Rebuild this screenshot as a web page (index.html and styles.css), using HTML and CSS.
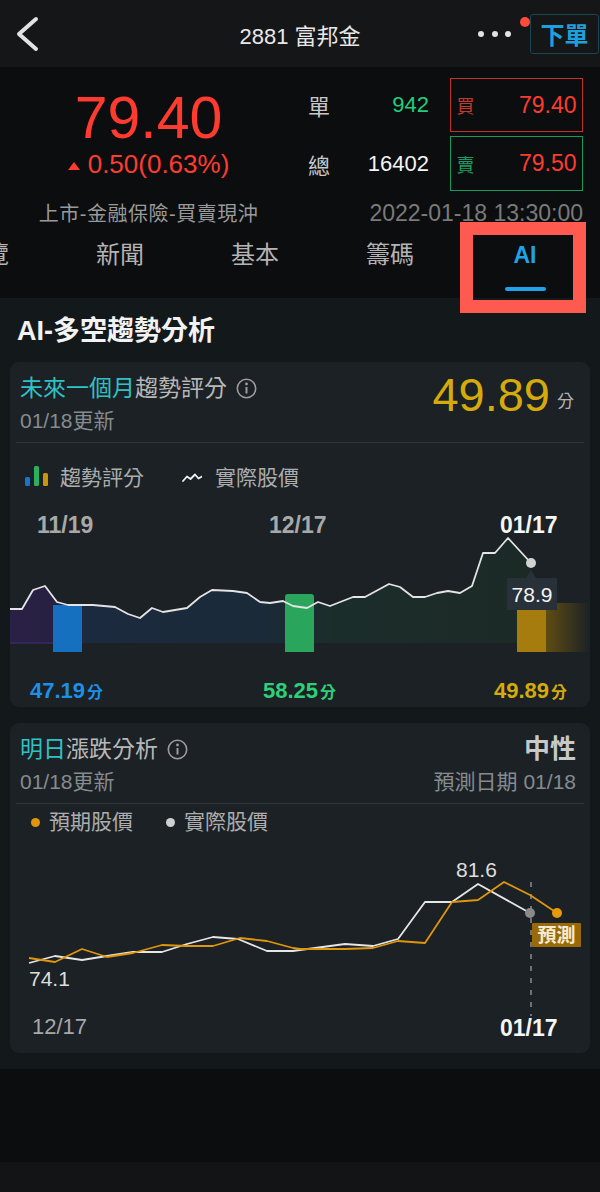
FILE: index.html
```html
<!DOCTYPE html>
<html lang="zh-Hant">
<head>
<meta charset="utf-8">
<title>2881 富邦金</title>
<link rel="stylesheet" href="styles.css">
</head>
<body>
<header class="topbar">
  <div class="tb-left">
    <svg class="back" width="26" height="36" viewBox="0 0 26 36"><path d="M22 3 L5 18 L22 33" fill="none" stroke="#e2e2e2" stroke-width="4" stroke-linecap="round" stroke-linejoin="round"/></svg>
  </div>
  <div class="tb-title">2881 富邦金</div>
  <div class="tb-right">
    <div class="dots"><i></i><i></i><i></i></div>
    <div class="order-btn">下單<span class="badge"></span></div>
  </div>
</header>

<section class="quote">
  <div class="q-left">
    <div class="price">79.40</div>
    <div class="change"><span class="tri"></span>0.50(0.63%)</div>
    <div class="cat">上市-金融保險-買賣現沖</div>
  </div>
  <div class="q-right">
    <div class="q-row">
      <span class="q-lab">單</span><span class="q-val green">942</span>
      <div class="box buy"><span>買</span><b>79.40</b></div>
    </div>
    <div class="q-row r2">
      <span class="q-lab">總</span><span class="q-val">16402</span>
      <div class="box sell"><span>賣</span><b>79.50</b></div>
    </div>
    <div class="q-time">2022-01-18 13:30:00</div>
  </div>
</section>

<nav class="tabs-wrap">
  <div class="tabs">
    <div class="tab"><span>總覽</span></div>
    <div class="tab"><span>新聞</span></div>
    <div class="tab"><span>基本</span></div>
    <div class="tab"><span>籌碼</span></div>
    <div class="tab active"><span>AI</span><i class="ul"></i></div>
  </div>
</nav>

<main class="content">
  <h2 class="sec-title">AI-多空趨勢分析</h2>

  <div class="card">
    <div class="card-head h1">
      <div>
        <div class="card-title"><span class="teal">未來一個月</span>趨勢評分<svg class="info" width="21" height="21" viewBox="0 0 21 21"><circle cx="10.5" cy="10.5" r="9.2" fill="none" stroke="#9c9c9c" stroke-width="1.6"/><circle cx="10.5" cy="6" r="1.4" fill="#9c9c9c"/><path d="M10.5 9 V15.5" stroke="#9c9c9c" stroke-width="2"/></svg></div>
        <div class="card-sub">01/18更新</div>
      </div>
      <div class="score"><span class="num">49.89</span><span class="unit">分</span></div>
    </div>
    <div class="legend l1">
      <span class="lg"><svg class="bars" width="23" height="20" viewBox="0 0 23 20"><rect x="0" y="11" width="5" height="9" rx="1.5" fill="#1677c8"/><rect x="9" y="0" width="5" height="20" rx="1.5" fill="#2bb061"/><rect x="18" y="7" width="5" height="13" rx="1.5" fill="#c9950d"/></svg>趨勢評分</span>
      <span class="lg"><svg class="zig" width="20" height="10" viewBox="0 0 20 10"><polyline points="1,8 5,3.5 8.5,6 13,1.5 16.5,5.5 20,3.5" fill="none" stroke="#f0f0f0" stroke-width="1.8" stroke-linejoin="round" stroke-linecap="round"/></svg>實際股價</span>
    </div>
    <svg class="chart" width="580" height="207" viewBox="10 500 580 207">
      <defs>
        <linearGradient id="ag" x1="0" x2="1" y1="0" y2="0">
          <stop offset="0" stop-color="#2a1f46"/>
          <stop offset="0.08" stop-color="#282043"/>
          <stop offset="0.15" stop-color="#1b2a3e"/>
          <stop offset="0.48" stop-color="#1a2a39"/>
          <stop offset="0.62" stop-color="#1b2d2b"/>
          <stop offset="1" stop-color="#1c2a26"/>
        </linearGradient>
        <linearGradient id="goldfade" x1="0" x2="1" y1="0" y2="0">
          <stop offset="0" stop-color="#5f4c12"/>
          <stop offset="1" stop-color="#5f4c12" stop-opacity="0"/>
        </linearGradient>
      </defs>
      <text x="37" y="533" class="dt">11/19</text>
      <text x="269" y="533" class="dt">12/17</text>
      <text x="500" y="533" class="dt wh">01/17</text>
      <path d="M8 643 L8 609 L22 609 L33 590 L45 586 L57 602 L68 605 L93 605 L115 607 L128 614 L140 618 L152 608 L163 612 L187 608 L200 597 L212 590 L233 591 L247 593 L260 602 L270 603 L283 601 L293 606 L307 608 L318 602 L330 606 L353 597 L365 597 L389 584 L400 587 L413 597 L425 597 L437 593 L448 591 L460 593 L472 586 L483 553 L495 553 L508 538 L531 563 L531 643 Z" fill="url(#ag)"/>
      <path d="M8 643 H53" stroke="#3a2a66" stroke-width="1.5"/>
      <rect x="53" y="605" width="29" height="47" fill="#1670c0"/>
      <path d="M285 652 V597 Q285 594 288 594 H311 Q314 594 314 597 V652 Z" fill="#2aa65c"/>
      <rect x="517" y="609" width="29" height="43" fill="#a77c0f"/>
      <rect x="546" y="603" width="44" height="49" fill="url(#goldfade)"/>
      <polyline points="8,609 22,609 33,590 45,586 57,602 68,605 93,605 115,607 128,614 140,618 152,608 163,612 187,608 200,597 212,590 233,591 247,593 260,602 270,603 283,601 293,606 307,608 318,602 330,606 353,597 365,597 389,584 400,587 413,597 425,597 437,593 448,591 460,593 472,586 483,553 495,553 508,538 531,563" fill="none" stroke="#e4e4e4" stroke-width="1.8" stroke-linejoin="round"/>
      <circle cx="531" cy="563" r="5" fill="#d2d2d2"/>
      <path d="M526 578 L531 570 L536 578 Z" fill="#28313a"/>
      <rect x="507" y="578" width="50" height="32" fill="#28313a"/>
      <text x="532" y="602" text-anchor="middle" class="tip">78.9</text>
      <text x="30" y="698" class="val blue">47.19<tspan class="u" dx="2">分</tspan></text>
      <text x="263" y="698" class="val green">58.25<tspan class="u" dx="2">分</tspan></text>
      <text x="494" y="698" class="val gold">49.89<tspan class="u" dx="2">分</tspan></text>
    </svg>
  </div>

  <div class="card">
    <div class="card-head">
      <div class="hrow">
        <div class="card-title"><span class="teal">明日</span>漲跌分析<svg class="info" width="21" height="21" viewBox="0 0 21 21"><circle cx="10.5" cy="10.5" r="9.2" fill="none" stroke="#9c9c9c" stroke-width="1.6"/><circle cx="10.5" cy="6" r="1.4" fill="#9c9c9c"/><path d="M10.5 9 V15.5" stroke="#9c9c9c" stroke-width="2"/></svg></div>
        <div class="mood">中性</div>
      </div>
      <div class="hrow">
        <div class="card-sub">01/18更新</div>
        <div class="card-sub">預測日期 01/18</div>
      </div>
    </div>
    <div class="legend l2">
      <span class="lg"><i class="dot od"></i>預期股價</span>
      <span class="lg"><i class="dot gd"></i>實際股價</span>
    </div>
    <svg class="chart" width="580" height="213" viewBox="10 840 580 213">
      <text x="456" y="877" class="lbl">81.6</text>
      <line x1="531" y1="882" x2="531" y2="1016" stroke="#8c8c8c" stroke-width="1.5" stroke-dasharray="5 7"/>
      <polyline points="29,963 55,956 82,960 107,956 133,952 162,952 187,944 213,937 238,939 267,951 293,951 300,950 345,944 373,946 398,939 425,902 452,902 478,884 530,913" fill="none" stroke="#e6e6e6" stroke-width="1.8" stroke-linejoin="round"/>
      <polyline points="29,958 55,962 82,949 107,957 133,953 162,945 187,946 213,946 240,938 267,941 293,948 300,949 345,949 373,948 398,941 425,943 452,902 478,900 504,882 530,895 557,913" fill="none" stroke="#e0960a" stroke-width="1.8" stroke-linejoin="round"/>
      <circle cx="530" cy="913" r="5" fill="#8a8a8a"/>
      <circle cx="557" cy="913" r="5" fill="#e8990a"/>
      <rect x="532" y="923" width="49" height="24" rx="1" fill="#9b6a08"/>
      <text x="556.5" y="942" text-anchor="middle" class="tag">預測</text>
      <text x="29" y="986" class="lbl">74.1</text>
      <text x="32" y="1034" class="dt2">12/17</text>
      <text x="500" y="1036" class="dt wh">01/17</text>
    </svg>
  </div>
</main>

<div class="band"></div>
<div class="bottombar"></div>

<div class="annot"></div>
</body>
</html>
```

FILE: styles.css
```css
* { box-sizing: border-box; margin: 0; padding: 0; }
html, body { background: #0c0d0f; }
body {
  width: 600px;
  height: 1192px;
  overflow: hidden;
  position: relative;
  font-family: "Liberation Sans", "Noto Sans CJK TC", sans-serif;
  color: #ddd;
}

/* top bar */
.topbar {
  height: 67px;
  background: #151618;
  display: grid;
  grid-template-columns: 1fr auto 1fr;
  align-items: center;
}
.tb-left { padding-left: 14px; display: flex; align-items: center; }
.back { display: block; }
.tb-title { font-size: 22px; color: #e8e8e8; }
.tb-right { display: flex; justify-content: flex-end; align-items: center; }
.dots { display: flex; gap: 7.5px; margin-right: 19px; }
.dots i { display: block; width: 6px; height: 6px; border-radius: 50%; background: #e2e2e2; }
.order-btn {
  position: relative;
  width: 69px;
  height: 40px;
  margin-right: 1px;
  border: 1.5px solid #1b4656;
  border-radius: 3px;
  color: #1ea0dc;
  font-weight: bold;
  font-size: 24px;
  display: flex;
  align-items: center;
  justify-content: center;
}
.badge {
  position: absolute;
  left: -11.5px;
  top: 2.5px;
  width: 10px;
  height: 10px;
  border-radius: 50%;
  background: #ff4b3a;
}

/* quote */
.quote {
  display: grid;
  grid-template-columns: 297px 1fr;
  height: 165px;
  padding-top: 11px;
}
.q-left { text-align: center; padding-top: 11px; }
.price { font-size: 59px; line-height: 58px; color: #ff3b30; }
.change {
  font-size: 26px;
  line-height: 30px;
  color: #ff3b30;
  margin-top: 2px;
  display: flex;
  justify-content: center;
  align-items: center;
  gap: 8px;
}
.tri {
  width: 0; height: 0;
  border-left: 6px solid transparent;
  border-right: 6px solid transparent;
  border-bottom: 8px solid #ff3b30;
  margin-top: 3px;
}
.cat { font-size: 20px; line-height: 30px; color: #9a9a9a; margin-top: 20px; letter-spacing: 0.5px; }

.q-right { padding-right: 17px; }
.q-row { display: flex; align-items: center; height: 54px; }
.q-row.r2 { margin-top: 4px; height: 55px; }
.q-lab { margin-left: 11px; width: 22px; font-size: 22px; color: #c8c8c8; }
.q-val { flex: 1; text-align: right; margin-right: 21px; font-size: 22px; color: #f4f4f4; }
.q-val.green { color: #1fcf7a; }
.box {
  width: 133px;
  height: 100%;
  border: 1.5px solid;
  display: flex;
  justify-content: space-between;
  align-items: center;
  padding: 0 5.5px;
}
.box span { font-size: 18px; }
.box b { font-weight: normal; font-size: 23px; color: #ff3b30; }
.box.buy { border-color: #c2342a; }
.box.buy span { color: #c23a2e; }
.box.sell { border-color: #169a5e; }
.box.sell span { color: #1d9e60; }
.q-time { text-align: right; font-size: 23px; line-height: 30px; color: #7a7a7a; margin-top: 7px; }

/* tabs */
.tabs-wrap { height: 66px; overflow: hidden; }
.tabs { display: flex; margin-left: -82.5px; }
.tab {
  flex: 0 0 135px;
  display: flex;
  flex-direction: column;
  align-items: center;
  font-size: 24px;
  line-height: 46px;
  color: #b4b4b4;
}
.tab.active { color: #1fa3e8; font-weight: bold; font-size: 23px; }
.tab .ul { display: block; width: 41px; height: 4px; border-radius: 2px; background: #1fa3e8; margin-top: 9px; }

/* content */
.content { background: #13181b; padding: 16px 10px 16px; }
.sec-title { font-size: 27px; line-height: 34px; font-weight: bold; color: #f2f2f2; padding-left: 7px; }
.card { background: #1b2125; border-radius: 9px; margin-top: 14px; overflow: hidden; }
.card + .card { margin-top: 16px; }
.card-head {
  margin: 0 6px;
  padding: 11px 8px 8px 4px;
  border-bottom: 1px solid #30373b;
  height: 81px;
}
.card-head.h1 { display: flex; justify-content: space-between; align-items: flex-end; }
.card-title { font-size: 23px; line-height: 30px; color: #b8b8b8; display: flex; align-items: center; }
.teal { color: #2fc1c5; }
.info { margin-left: 9px; display: block; }
.card-sub { font-size: 21px; line-height: 26px; color: #868b8f; margin-top: 5px; }
.score { color: #d4aa0c; line-height: 47px; margin-bottom: 5px; margin-right: 2px; white-space: nowrap; }
.score .num { font-size: 47px; }
.score .unit { font-size: 17px; line-height: 17px; color: #b4b4b4; margin-left: 7px; vertical-align: 4px; }
.hrow { display: flex; justify-content: space-between; align-items: center; }
.mood { font-size: 26px; line-height: 30px; font-weight: bold; color: #c8c8c8; }

.legend { display: flex; align-items: center; font-size: 21px; line-height: 30px; color: #adadad; }
.lg { display: flex; align-items: center; }
.l1 { padding: 20px 0 7px 15px; }
.l1 .bars { margin-right: 12px; margin-bottom: 5px; display: block; }
.l1 .lg + .lg { margin-left: 38px; }
.l1 .zig { margin-right: 13px; display: block; }
.l2 { padding: 3px 0 3px 21px; }
.l2 .lg + .lg { margin-left: 33px; }
.dot { display: block; width: 9px; height: 9px; border-radius: 50%; margin-right: 9px; }
.dot.od { background: #e0960a; }
.dot.gd { background: #cfcfcf; }

.chart { display: block; }
.chart text { font-family: "Liberation Sans", "Noto Sans CJK TC", sans-serif; }
.dt { font-size: 23px; font-weight: bold; fill: #a8a8a8; }
.dt.wh { fill: #f6f6f6; }
.dt2 { font-size: 22px; fill: #a8a8a8; }
.tip { font-size: 21px; fill: #f4f4f4; }
.val { font-size: 22px; font-weight: bold; }
.val .u { font-size: 16px; }
.val.blue { fill: #1e8fe6; }
.val.green { fill: #2ecf78; }
.val.gold { fill: #d4aa0c; }
.lbl { font-size: 21px; fill: #dedede; }
.tag { font-size: 19px; font-weight: bold; fill: #f5ead2; }

.band { height: 93px; background: #0c0d0f; }
.bottombar { height: 30px; background: #131416; }

/* annotation frame over the AI tab */
.annot {
  position: absolute;
  left: 460px;
  top: 222px;
  width: 126px;
  height: 91px;
  border: 13px solid #ff5a4f;
}
```
